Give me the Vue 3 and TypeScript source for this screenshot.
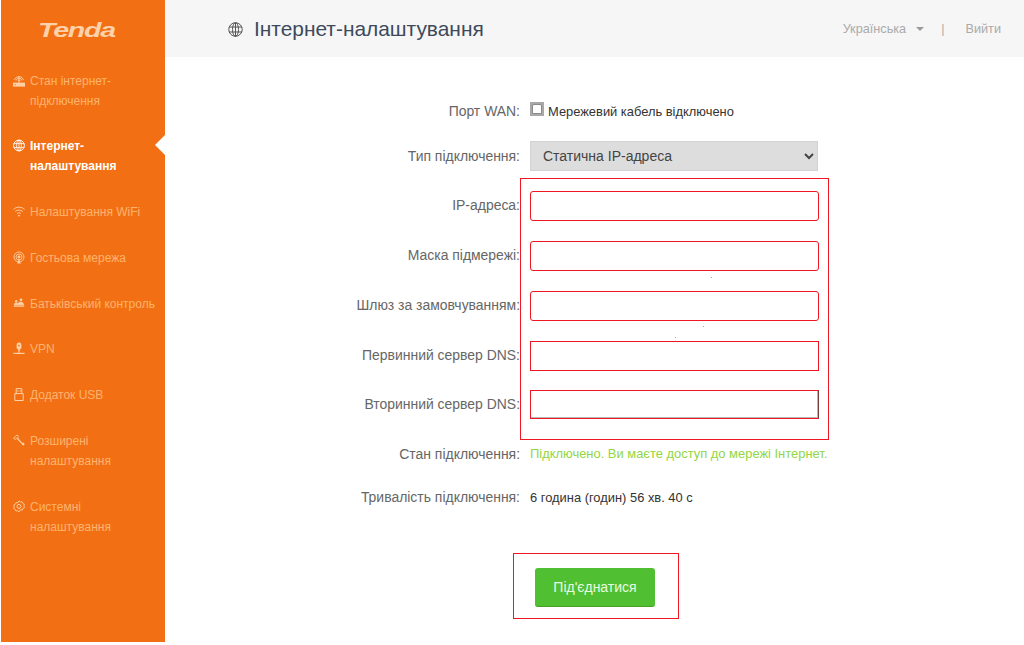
<script setup lang="ts">
interface NavItem { id: string; lines: string[]; active?: boolean }
const nav: NavItem[] = [
  { id: 'status', lines: ['Стан інтернет-', 'підключення'] },
  { id: 'globe', lines: ['Інтернет-', 'налаштування'], active: true },
  { id: 'wifi', lines: ['Налаштування WiFi'] },
  { id: 'guest', lines: ['Гостьова мережа'] },
  { id: 'parent', lines: ['Батьківський контроль'] },
  { id: 'vpn', lines: ['VPN'] },
  { id: 'usb', lines: ['Додаток USB'] },
  { id: 'tools', lines: ['Розширені', 'налаштування'] },
  { id: 'gear', lines: ['Системні', 'налаштування'] },
]
const inputs: { label: string; kind?: string }[] = [
  { label: 'IP-адреса:' },
  { label: 'Маска підмережі:' },
  { label: 'Шлюз за замовчуванням:' },
  { label: 'Первинний сервер DNS:', kind: 'square' },
  { label: 'Вторинний сервер DNS:', kind: 'square native' },
]
</script>

<template>
  <div class="page">
    <aside class="side">
      <div class="logo"><span>Tenda</span></div>
      <ul class="nav">
        <li v-for="n in nav" :key="n.id" class="item" :class="{ active: n.active }">
          <svg class="ico" viewBox="0 0 12 13" fill="none" stroke="currentColor" stroke-width="1">
            <template v-if="n.id === 'status'">
              <path d="M0 8.6h12v4H0z" fill="currentColor" stroke="none" />
              <path d="M1.4 6a4.8 4.8 0 0 1 9.2 0M3 6.5a3.1 3.1 0 0 1 6 0M4.7 7a1.4 1.4 0 0 1 2.6 0" stroke-width=".9" />
              <path d="M6 2v7" stroke-width="1" />
              <circle cx="2.2" cy="10.6" r=".6" fill="#f27013" stroke="none" />
            </template>
            <template v-else-if="n.id === 'globe'">
              <circle cx="6" cy="6.5" r="5.4" />
              <ellipse cx="6" cy="6.5" rx="2.4" ry="5.4" stroke-width=".8" />
              <path d="M.8 4.6h10.4M.8 8.4h10.4M6 1.1v10.8" stroke-width=".8" />
            </template>
            <template v-else-if="n.id === 'wifi'">
              <path d="M.4 4.4a8 8 0 0 1 11.2 0M2.2 6.6a5.4 5.4 0 0 1 7.6 0M4 8.6a2.8 2.8 0 0 1 4 0" stroke-width=".9" />
              <circle cx="6" cy="10.6" r=".9" fill="currentColor" stroke="none" />
            </template>
            <template v-else-if="n.id === 'guest'">
              <circle cx="6" cy="6" r="5" stroke-width=".9" />
              <circle cx="6" cy="6" r="3" stroke-width=".9" />
              <circle cx="6" cy="6" r="1.4" fill="currentColor" stroke="none" />
              <path d="M4.2 12.6h3.6L6 7.5z" fill="currentColor" stroke="none" />
            </template>
            <template v-else-if="n.id === 'parent'">
              <path d="M.8 8.4c0-2 1.2-2.8 2.4-2.8.7 0 1.3.3 1.7.7.5-1 1.4-1.6 2.6-1.6 2 0 3.7 1.4 3.7 3.7v1.4H.8z" fill="currentColor" stroke="none" />
              <circle cx="3.2" cy="4.2" r="1.2" fill="currentColor" stroke="none" />
              <circle cx="8" cy="2.8" r="1.4" fill="currentColor" stroke="none" />
              <path d="M.8 8.3h10.4" stroke="#f27013" stroke-width=".5" />
            </template>
            <template v-else-if="n.id === 'vpn'">
              <path d="M6 .6a2.4 2.4 0 0 1 2.4 2.4v3L6 8.8 3.6 6V3A2.4 2.4 0 0 1 6 .6z" fill="currentColor" stroke="none" />
              <circle cx="6" cy="3.6" r=".8" fill="#f27013" stroke="none" />
              <path d="M.4 11.4h11.2" stroke-width="1.2" />
              <path d="M6 8v3" stroke-width="1.1" />
            </template>
            <template v-else-if="n.id === 'usb'">
              <path d="M1.8 5.6h8.4v6.9H1.8zM3.2 5.6V.6h5.6v5" stroke-width="1" />
              <path d="M4.8 2.2v1.6M7.2 2.2v1.6" stroke-width=".9" />
            </template>
            <template v-else-if="n.id === 'tools'">
              <path d="M.5 4.2 4 1l1.5 1.2-1 .9 1 1-1 1-1-1-1.4 1.3z" stroke-width=".9" />
              <path d="M4.5 4.6 10.6 11" stroke-width="1.3" />
              <path d="M8.9 9.9l1.7-1.4 1.1 1.7-1.4 1.4z" fill="currentColor" stroke="none" />
            </template>
            <template v-else>
              <path d="M6 .8l1.3 1.2 1.8-.3.6 1.6 1.6.8-.4 1.8.5 1.7-1.6.9-.6 1.6-1.8-.3L6 11.9l-1.3-1.2-1.8.3-.6-1.6-1.6-.9.5-1.7-.4-1.8 1.6-.8.6-1.6 1.8.3z" stroke-width=".9" />
              <circle cx="6" cy="6.4" r="2" stroke-width="1" />
            </template>
          </svg>
          <span class="lbl"><span v-for="l in n.lines" :key="l" class="line">{{ l }}</span></span>
        </li>
      </ul>
    </aside>

    <main class="main">
      <header class="head">
        <h1 class="title">
          <svg class="title-ico" viewBox="0 0 12 12" fill="none" stroke="currentColor" stroke-width=".8">
            <circle cx="6" cy="6" r="5.4" />
            <ellipse cx="6" cy="6" rx="2.4" ry="5.4" />
            <path d="M.8 4h10.4M.8 8h10.4M6 .6v10.8" />
          </svg>
          Інтернет-налаштування
        </h1>
        <div class="tools">
          <span>Українська</span><i class="caret"></i><span class="sep">|</span><span>Вийти</span>
        </div>
      </header>

      <form class="form" @submit.prevent>
        <div class="row first">
          <label class="label">Порт WAN:</label>
          <div class="val">
            <span class="port"><i></i></span>Мережевий кабель відключено
          </div>
        </div>
        <div class="row sel">
          <label class="label">Тип підключення:</label>
          <select class="select"><option>Статична IP-адреса</option></select>
        </div>
        <div v-for="f in inputs" :key="f.label" class="row field">
          <label class="label">{{ f.label }}</label>
          <input class="input" :class="f.kind" type="text" />
        </div>
        <div class="row status">
          <label class="label">Стан підключення:</label>
          <div class="ok">Підключено. Ви маєте доступ до мережі Інтернет.</div>
        </div>
        <div class="row">
          <label class="label">Тривалість підключення:</label>
          <div class="val">6 година (годин) 56 хв. 40 с</div>
        </div>
        <div class="actions"><button class="btn" type="button">Під'єднатися</button></div>
      </form>

      <div class="mark mark-fields"></div>
      <div class="mark mark-btn"></div>
      <i class="dot d1"></i><i class="dot d2"></i><i class="dot d3"></i>
    </main>
  </div>
</template>

<style>
html, body { margin: 0; background: #fff; }
</style>

<style scoped>
.page { display: flex; width: 1024px; height: 645px; overflow: hidden; font-family: "Liberation Sans", Arial, sans-serif; background: #fff; }
.side { width: 164px; height: 642px; margin-left: 1px; background: #f27013; flex: none; color: #fdb36f; }
.logo { height: 70.5px; box-sizing: border-box; padding: 18px 0 0 37px; }
.logo span { display: inline-block; font: italic 700 21px/23px "Liberation Sans", sans-serif; color: #fdd2ab; letter-spacing: -.9px; transform: scaleX(1.36); transform-origin: left center; }
.nav { list-style: none; margin: 0; padding: 0; }
.item { position: relative; display: flex; padding-left: 12px; margin-bottom: 25.8px; font-size: 12px; line-height: 20px; }
.ico { width: 12px; height: 13px; margin: 3px 5px 0 0; flex: none; color: #fdd0a6; }
.line { display: block; }
.active { color: #fff; font-weight: 700; }
.active .ico { color: #fff; }
.active::after { content: ""; position: absolute; right: 0; top: -1px; border: 10px solid transparent; border-left-width: 0; border-right: 10px solid #fff; }
.main { position: relative; flex: 1; min-width: 0; }
.head { height: 57px; background: #f6f6f6; display: flex; align-items: center; justify-content: space-between; padding: 0 23px 0 63px; }
.title { display: flex; align-items: center; margin: 0; font-size: 20.9px; font-weight: 400; color: #3d4a5c; }
.title-ico { width: 15px; height: 15px; margin-right: 11px; margin-top: 2px; color: #555; }
.tools { display: flex; align-items: center; font-size: 12.7px; color: #aaa; }
.caret { margin: 1px 0 0 10px; border: 4px solid transparent; border-top-color: #999; border-bottom-width: 0; }
.sep { margin: 0 21px 0 17px; }
.form { display: block; padding-top: 39px; }
.row { display: flex; align-items: center; height: 30px; margin-bottom: 14px; }
.first { margin-bottom: 15px; }
.sel { margin-bottom: 20px; }
.field { margin-bottom: 20px; }
.field .label { padding-bottom: 2px; }
.field:nth-child(6) { margin-bottom: 19px; }
.field:nth-child(7) { height: 29px; margin-bottom: 19px; }
.label { width: 355px; margin-right: 10px; text-align: right; font-size: 13.95px; color: #666; white-space: nowrap; flex: none; }
.val { display: flex; align-items: center; font-size: 12.9px; color: #333; white-space: nowrap; }
.port { display: block; width: 14px; height: 14px; box-sizing: border-box; margin: -5px 4px 0 0; background: #a8a8a8; padding: 2px 2px 2px; }
.port i { display: block; width: 10px; height: 10px; box-sizing: border-box; background: #fff; border: 1px solid #8a8a8a; border-radius: 2px 2px 0 0; }
.select { width: 288px; height: 30px; box-sizing: border-box; padding-left: 8px; border: 1px solid #d2d2d2; border-radius: 0; background: #ddd; color: #444; font: 14px "Liberation Sans", sans-serif; }
.input { width: 289px; height: 100%; box-sizing: border-box; border: 1px solid #f01622; border-radius: 3px; outline: none; background: #fff; padding: 0 8px; }
.square { border-radius: 0; }
.native { box-shadow: inset -1px -1px 0 #b8b8b8; border-right-color: #7a3a3a; }
.status { margin-bottom: 14px; }
.status .label { padding-top: 1px; }
.ok { font-size: 12.93px; color: #92d642; white-space: nowrap; }
.actions { padding: 42px 0 0 370px; }
.btn { display: block; width: 120px; height: 39px; border: 0; border-bottom: 1px solid #44a323; border-radius: 3px; background: #50c032; color: #e7fbe0; font: 14px "Liberation Sans", sans-serif; }
.mark { position: absolute; box-sizing: border-box; border: 1px solid #f01622; pointer-events: none; }
.mark-fields { left: 355px; top: 178px; width: 309px; height: 262px; }
.mark-btn { left: 348px; top: 553px; width: 166px; height: 66px; }
.dot { position: absolute; width: 1px; height: 1px; background: #c98; }
.d1 { left: 546px; top: 277px; }
.d2 { left: 538px; top: 326px; }
.d3 { left: 510px; top: 337px; }
</style>
